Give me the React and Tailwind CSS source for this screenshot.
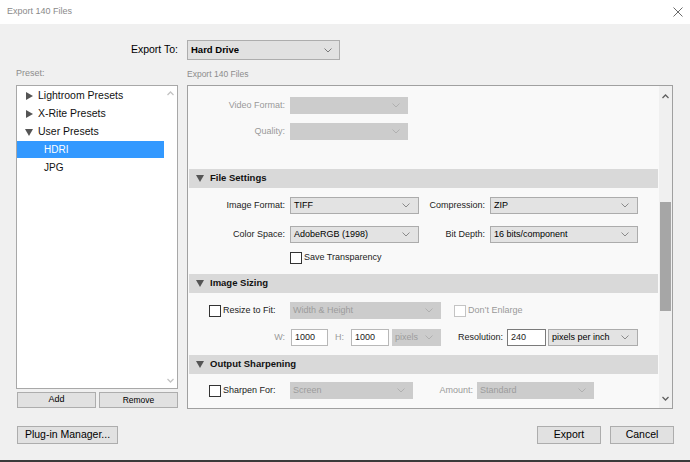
import React from "react";

const Chev = ({ c = "#808080", w = 8 }) => (
  <svg width={w} height="5" viewBox="0 0 8 5" className="shrink-0">
    <path d="M0.5 0.5 L4 4 L7.5 0.5" fill="none" stroke={c} strokeWidth="1" />
  </svg>
);

const ChevUp = ({ c = "#606060" }) => (
  <svg width="7" height="5" viewBox="0 0 7 5">
    <path d="M0.5 4 L3.5 1 L6.5 4" fill="none" stroke={c} strokeWidth="1.3" />
  </svg>
);
const ChevDown = ({ c = "#606060" }) => (
  <svg width="7" height="5" viewBox="0 0 7 5">
    <path d="M0.5 1 L3.5 4 L6.5 1" fill="none" stroke={c} strokeWidth="1.3" />
  </svg>
);

const TriDown = () => (
  <svg width="8" height="7" viewBox="0 0 8 7" className="shrink-0">
    <polygon points="0,0 8,0 4,7" fill="#555" />
  </svg>
);
const TriRight = () => (
  <svg width="7" height="8" viewBox="0 0 7 8" className="shrink-0">
    <polygon points="0,0 7,4 0,8" fill="#555" />
  </svg>
);

function Sel({ className, value, disabled }) {
  return (
    <div
      className={
        "h-[17px] flex items-center justify-between pl-[3px] pr-[8px] text-[9px] " +
        (disabled
          ? "bg-[#cccccc] text-[#9c9c9c] "
          : "bg-[#e3e3e3] border border-[#acacac] text-black ") +
        className
      }
    >
      <span className="whitespace-nowrap">{value}</span>
      <Chev c={disabled ? "#b0b0b0" : "#8a8a8a"} />
    </div>
  );
}

function Label({ className, children, dim }) {
  return (
    <div
      className={
        "text-right text-[9px] whitespace-nowrap " +
        (dim ? "text-[#9a9a9a] " : "text-[#222] ") +
        className
      }
    >
      {children}
    </div>
  );
}

function Check({ dim }) {
  return (
    <div
      className={
        "w-[12px] h-[12px] shrink-0 bg-white border " +
        (dim ? "border-[#c4c4c4]" : "border-[#333]")
      }
    />
  );
}

function Header({ children }) {
  return (
    <div className="h-[19px] bg-[#d9d9d9] flex items-center pl-[7px] gap-[6px]">
      <TriDown />
      <span className="text-[9.5px] font-bold text-[#111]">{children}</span>
    </div>
  );
}

function Input({ className, value, dark }) {
  return (
    <div
      className={
        "h-[17px] bg-white flex items-center pl-[3px] text-[9px] text-[#222] border " +
        (dark ? "border-[#7a7a7a] " : "border-[#b8b8b8] ") +
        className
      }
    >
      {value}
    </div>
  );
}

function Btn({ className, children }) {
  return (
    <div
      className={
        "bg-[#e1e1e1] border border-[#adadad] flex items-center justify-center text-black " +
        className
      }
    >
      {children}
    </div>
  );
}

export default function App() {
  return (
    <div
      className="w-[690px] h-[462px] flex flex-col overflow-hidden select-none"
      style={{ fontFamily: '"Liberation Sans", Arial, sans-serif' }}
    >
      {/* Title bar */}
      <div className="h-[24px] bg-white flex items-center justify-between pl-[7px] pr-[7px] shrink-0">
        <span className="text-[9px] text-[#8a8a8a]">Export 140 Files</span>
        <svg width="10" height="10" viewBox="0 0 10 10">
          <path d="M0.5 0.5 L9.5 9.5 M9.5 0.5 L0.5 9.5" stroke="#6a6a6a" strokeWidth="1" />
        </svg>
      </div>

      {/* Body */}
      <div className="flex-1 bg-[#f0f0f0] border-b-2 border-[#3a3a3a] flex flex-col">
        {/* Export To row */}
        <div className="flex items-center gap-[9px] mt-[16px]">
          <div className="w-[178px] text-right text-[10.5px] text-black">Export To:</div>
          <div className="w-[153px] h-[20px] bg-[#e1e1e1] border border-[#adadad] flex items-center justify-between pl-[3px] pr-[7px]">
            <span className="text-[9.5px] font-bold text-black">Hard Drive</span>
            <Chev c="#7a7a7a" />
          </div>
        </div>

        {/* labels */}
        <div className="flex mt-[8px] h-[12px] items-center">
          <div className="w-[162px] ml-[16px] text-[9px] text-[#8c8c8c]">Preset:</div>
          <div className="ml-[9px] text-[8.5px] text-[#8c8c8c]">Export 140 Files</div>
        </div>

        {/* panels */}
        <div className="flex mt-[5px] gap-[9px] ml-[16px]">
          {/* Left column */}
          <div className="w-[162px] flex flex-col">
            <div className="h-[304px] bg-white border border-[#a8a8a8] flex">
              <div className="flex-1 flex flex-col pt-[1px] text-[10.5px] text-[#111]">
                <div className="h-[18px] flex items-center pl-[9px] gap-[5px]">
                  <TriRight />
                  <span>Lightroom Presets</span>
                </div>
                <div className="h-[18px] flex items-center pl-[9px] gap-[5px]">
                  <TriRight />
                  <span>X-Rite Presets</span>
                </div>
                <div className="h-[18px] flex items-center pl-[8px] gap-[5px]">
                  <TriDown />
                  <span>User Presets</span>
                </div>
                <div className="h-[17px] flex items-center pl-[27px] bg-[#3399ff] text-white text-[10px]">
                  HDRI
                </div>
                <div className="h-[19px] flex items-center pl-[27px] text-[10px]">JPG</div>
              </div>
              <div className="w-[13px] flex flex-col items-center justify-between py-[5px]">
                <ChevUp c="#c4c4c4" />
                <ChevDown c="#c4c4c4" />
              </div>
            </div>
            <div className="flex gap-[3px] mt-[3px] pl-[1px]">
              <Btn className="w-[79px] h-[16px] text-[9px]">Add</Btn>
              <Btn className="w-[79px] h-[16px] text-[8.5px]">Remove</Btn>
            </div>
          </div>

          {/* Right panel */}
          <div className="w-[486px] h-[324px] border border-[#a0a0a0] bg-[#f9f9f9] flex">
            <div className="w-[471px] overflow-hidden px-[1px] flex flex-col">
              <div className="pt-[11px] flex flex-col gap-[9px] mb-[29px]">
                <div className="flex items-center gap-[5px]">
                  <Label dim className="w-[96px]">Video Format:</Label>
                  <Sel disabled className="w-[118px]" value="" />
                </div>
                <div className="flex items-center gap-[5px]">
                  <Label dim className="w-[96px]">Quality:</Label>
                  <Sel disabled className="w-[118px]" value="" />
                </div>
              </div>

              <Header>File Settings</Header>
              <div className="pt-[9px] pb-[10px] flex flex-col">
                <div className="flex items-center">
                  <Label className="w-[96px]">Image Format:</Label>
                  <Sel className="w-[129px] ml-[5px]" value="TIFF" />
                  <Label className="w-[66px]">Compression:</Label>
                  <Sel className="w-[148px] ml-[5px]" value="ZIP" />
                </div>
                <div className="flex items-center mt-[12px]">
                  <Label className="w-[96px]">Color Space:</Label>
                  <Sel className="w-[129px] ml-[5px]" value="AdobeRGB (1998)" />
                  <Label className="w-[66px]">Bit Depth:</Label>
                  <Sel className="w-[148px] ml-[5px]" value="16 bits/component" />
                </div>
                <div className="flex items-center mt-[9px] ml-[101px] gap-[2px] h-[12px]">
                  <Check />
                  <span className="text-[9px] text-[#222]">Save Transparency</span>
                </div>
              </div>

              <Header>Image Sizing</Header>
              <div className="pt-[9px] pb-[9px] flex flex-col">
                <div className="flex items-center">
                  <div className="w-[81px] ml-[20px] flex items-center gap-[2px]">
                    <Check />
                    <span className="text-[9px] text-[#222]">Resize to Fit:</span>
                  </div>
                  <Sel disabled className="w-[151px]" value="Width & Height" />
                  <div className="ml-[13px] flex items-center gap-[2px]">
                    <Check dim />
                    <span className="text-[9px] text-[#9a9a9a]">Don’t Enlarge</span>
                  </div>
                </div>
                <div className="flex items-center mt-[10px]">
                  <Label dim className="w-[96px]">W:</Label>
                  <Input className="w-[37px] ml-[6px]" value="1000" />
                  <Label dim className="w-[16px]">H:</Label>
                  <Input className="w-[38px] ml-[7px]" value="1000" />
                  <Sel disabled className="w-[49px] ml-[3px]" value="pixels" />
                  <Label className="w-[62px]">Resolution:</Label>
                  <Input dark className="w-[39px] ml-[4px]" value="240" />
                  <Sel className="w-[90px] ml-[2px]" value="pixels per inch" />
                </div>
              </div>

              <Header>Output Sharpening</Header>
              <div className="pt-[8px] flex flex-col">
                <div className="flex items-center">
                  <div className="w-[81px] ml-[20px] flex items-center gap-[2px]">
                    <Check />
                    <span className="text-[9px] text-[#222]">Sharpen For:</span>
                  </div>
                  <Sel disabled className="w-[123px]" value="Screen" />
                  <Label dim className="w-[60px]">Amount:</Label>
                  <Sel disabled className="w-[117px] ml-[4px]" value="Standard" />
                </div>
              </div>
            </div>

            {/* scrollbar */}
            <div className="flex-1 bg-[#f0f0f0] flex flex-col items-center">
              <div className="h-[20px] flex items-center justify-center">
                <ChevUp />
              </div>
              <div className="h-[96px]" />
              <div className="w-[11px] h-[109px] bg-[#a6a6a6]" />
              <div className="flex-1" />
              <div className="h-[20px] flex items-center justify-center">
                <ChevDown />
              </div>
            </div>
          </div>
        </div>

        {/* footer */}
        <div className="flex items-center mt-[17px] ml-[17px] pr-[16px]">
          <Btn className="w-[101px] h-[18px] text-[10.5px]">Plug-in Manager...</Btn>
          <div className="flex-1" />
          <Btn className="w-[64px] h-[18px] text-[10.5px]">Export</Btn>
          <Btn className="w-[64px] h-[18px] text-[10.5px] ml-[9px]">Cancel</Btn>
        </div>
      </div>
    </div>
  );
}
